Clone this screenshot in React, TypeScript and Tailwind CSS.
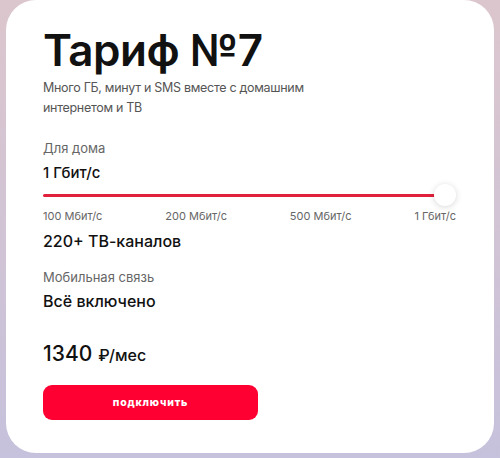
const SPEEDS = ["100 Мбит/с", "200 Мбит/с", "500 Мбит/с", "1 Гбит/с"];

export default function App() {
  return (
    <div className="h-[458px] w-[500px] overflow-hidden bg-gradient-to-b from-[#dcc6cd] to-[#c6c1dc] px-[6px] pb-[5px] font-['Inter',sans-serif]">
      <div className="flex h-[453px] flex-col rounded-[30px] bg-white pl-[37px] pr-[38px] pt-[24px]">
        <h1 className="text-[44px] font-semibold leading-[52px] tracking-[-0.5px] text-[#111]">
          Тариф №7
        </h1>
        <p className="mt-[2px] w-[300px] text-[12.5px] leading-[20px] tracking-[-0.3px] text-[#555]">
          Много ГБ, минут и SMS вместе с домашним интернетом и ТВ
        </p>

        <div className="mt-[21px] text-[13px] leading-[18px] text-[#666]">Для дома</div>
        <div className="mt-[6px] text-[15px] font-medium leading-[20px] text-[#111]">1 Гбит/с</div>

        <div className="relative mt-[1px] h-[22px]">
          <div className="absolute left-0 right-[20px] top-[10px] h-[3px] rounded bg-[#e1203c]" />
          <div className="absolute right-0 top-0 h-[22px] w-[22px] rounded-full bg-white shadow-[0_1px_6px_rgba(0,0,0,0.16)]" />
        </div>
        <div className="mt-[2px] flex justify-between text-[11px] leading-[16px] text-[#666]">
          {SPEEDS.map((s) => (
            <span key={s}>{s}</span>
          ))}
        </div>

        <div className="mt-[6px] text-[16px] font-medium leading-[22px] text-[#111]">220+ ТВ-каналов</div>

        <div className="mt-[16px] text-[13px] leading-[18px] text-[#666]">Мобильная связь</div>
        <div className="mt-[4px] text-[16px] font-medium leading-[22px] text-[#111]">Всё включено</div>

        <div className="mt-[27px] flex items-baseline gap-[6px] text-[#111]">
          <span className="text-[21px] font-medium leading-[30px]">1340</span>
          <span className="text-[16px] font-medium leading-[30px]">₽/мес</span>
        </div>

        <button className="mt-[15px] h-[35px] w-[215px] rounded-[9px] bg-[#ff0032] text-[10.5px] font-extrabold tracking-[0.8px] text-white">
          подключить
        </button>
      </div>
    </div>
  );
}
